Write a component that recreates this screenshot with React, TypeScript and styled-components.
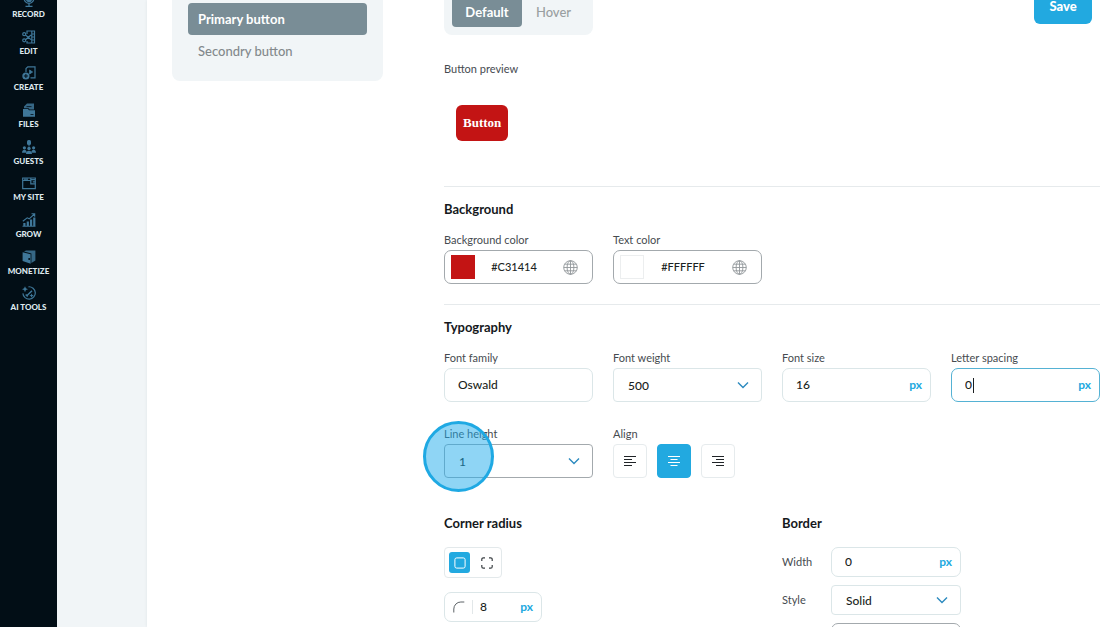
import React from 'react';
import styled, { createGlobalStyle, css } from 'styled-components';

const blue = '#22a9e0';
const slate = '#798d96';

const GlobalStyle = createGlobalStyle`
  *, *::before, *::after { box-sizing: border-box; }
  body { margin: 0; background: #fff; }
  body, button, input, select { font-family: Lato, "Liberation Sans", sans-serif; }
  button, input, select { margin: 0; }
  h2, ul { margin: 0; padding: 0; }
`;

const Page = styled.div`
  display: flex;
  height: 100vh;
  overflow: hidden;
  background: #f1f5f7;
`;

const Sidebar = styled.nav`
  flex: none;
  width: 57px;
  background: #020e16;
`;

const NavList = styled.ul`
  display: grid;
  grid-auto-rows: 1fr;
  height: 330px;
  margin-top: -7px;
  list-style: none;
`;

const NavLink = styled.a`
  display: flex;
  flex-direction: column;
  align-items: center;
  gap: 2px;
  color: #dfe9ee;
  font-size: 8px;
  line-height: 10px;
  font-weight: 900;
  text-decoration: none;
  white-space: nowrap;
  svg { display: block; width: 14px; height: 14px; color: #3f7799; }
`;

const Sheet = styled.main`
  flex: 1;
  display: flex;
  align-items: flex-start;
  gap: 61px;
  min-width: 0;
  margin-left: 90px;
  padding: 0 20px 0 25px;
  background: #fff;
  box-shadow: 0 0 3px rgba(20, 50, 70, 0.08);
`;

const SideCard = styled.div`
  flex: none;
  display: flex;
  flex-direction: column;
  width: 211px;
  padding: 3px 16px 14px;
  border-radius: 0 0 8px 8px;
  background: #f1f5f7;
`;

const SideTab = styled.button<{ $active?: boolean }>`
  height: 32px;
  padding: 0 10px;
  border: 0;
  border-radius: 4px;
  background: ${(p) => (p.$active ? slate : 'transparent')};
  color: ${(p) => (p.$active ? '#fff' : '#83898c')};
  font-size: 13px;
  font-weight: ${(p) => (p.$active ? 700 : 500)};
  text-align: left;
`;

const Editor = styled.div`
  flex: 1;
  min-width: 0;
`;

const TopBar = styled.div`
  display: flex;
  align-items: flex-start;
  justify-content: space-between;
  padding-right: 8px;
`;

const Segments = styled.div`
  display: grid;
  grid-template-columns: 70px 1fr;
  width: 149px;
  height: 35px;
  padding: 0 8px 8px;
  border-radius: 0 0 8px 8px;
  background: #f1f5f7;
`;

const Segment = styled.button<{ $active?: boolean }>`
  padding: 0 0 4px;
  border: 0;
  border-radius: 0 0 4px 4px;
  background: ${(p) => (p.$active ? slate : 'transparent')};
  color: ${(p) => (p.$active ? '#fff' : '#9a9fa1')};
  font-size: 13px;
  font-weight: ${(p) => (p.$active ? 700 : 500)};
`;

const SaveButton = styled.button`
  width: 58px;
  height: 24px;
  padding: 0 0 12px;
  border: 0;
  border-radius: 0 0 6px 6px;
  background: ${blue};
  color: #fff;
  font-size: 13px;
  line-height: 12px;
  font-weight: 900;
`;

const Preview = styled.section`
  display: flex;
  flex-direction: column;
  align-items: flex-start;
  gap: 28px;
  padding: 26px 0 45px;
`;

const PreviewButton = styled.button`
  height: 36px;
  margin-left: 12px;
  padding: 0 7px;
  border: 0;
  border-radius: 6px;
  background: #c31414;
  color: #fff;
  font-family: "Liberation Serif", serif;
  font-size: 13px;
  font-weight: 700;
`;

const Section = styled.section`
  padding: 12px 0 20px;
  border-top: 1px solid #e6eaec;
`;

const Heading = styled.h2`
  color: #15191c;
  font-size: 13px;
  line-height: 20px;
  font-weight: 700;
`;

const FieldGrid = styled.div`
  display: grid;
  grid-template-columns: repeat(4, minmax(0, 1fr));
  gap: 24px 20px;
  margin-top: 13px;
`;

const Field = styled.div`
  position: relative;
  display: flex;
  flex-direction: column;
  gap: 2px;
`;

const labelText = css`
  color: #464b50;
  font-size: 11px;
  line-height: 16px;
  font-weight: 400;
`;
const Label = styled.label`${labelText}`;
const Caption = styled.span`${labelText}`;

type Tone = 'light' | 'dark' | 'focus';
const toneColor = { light: '#dbe6e8', dark: '#a3a9ad', focus: '#55b2d4' };

const Box = styled.div<{ $tone?: Tone; $small?: boolean }>`
  position: relative;
  display: flex;
  align-items: center;
  height: ${(p) => (p.$small ? 30 : 34)}px;
  padding: 0 8px 0 13px;
  border: 1px solid ${(p) => toneColor[p.$tone || 'light']};
  border-radius: 7px;
  background: #fff;
`;

const ColorBox = styled(Box)`
  padding: 0 14px 0 6px;
`;

const TextInput = styled.input<{ $hug?: boolean }>`
  flex: ${(p) => (p.$hug ? 'none' : '1')};
  width: ${(p) => (p.$hug ? '8px' : '0')};
  min-width: 0;
  padding: 0;
  border: 0;
  outline: 0;
  background: transparent;
  color: #1b1f22;
  font-size: 12px;
  line-height: 20px;
  font-weight: 500;
`;

const HexInput = styled(TextInput)`
  padding-right: 10px;
  font-size: 11px;
  text-align: center;
`;

const TextCaret = styled.i`
  width: 1px;
  height: 15px;
  margin-right: auto;
  background: #1b1f22;
`;

const Unit = styled.span`
  color: ${blue};
  font-size: 12px;
  line-height: 16px;
  font-weight: 700;
`;

const Swatch = styled.span<{ $color: string }>`
  width: 24px;
  height: 24px;
  border: 1px solid ${(p) => (p.$color === '#FFFFFF' ? '#eceeef' : p.$color)};
  background: ${(p) => p.$color};
`;

const SelectBox = styled(Box)`
  padding: 0;
  border-radius: 4px;
  svg { position: absolute; right: 12px; pointer-events: none; }
`;

const Select = styled.select`
  width: 100%;
  height: 100%;
  padding: 0 30px 0 14px;
  border: 0;
  outline: 0;
  appearance: none;
  background: transparent;
  color: #1b1f22;
  font-size: 12px;
  font-weight: 500;
`;

const ButtonRow = styled.div`
  display: flex;
  gap: 10px;
`;

const AlignButton = styled.button<{ $active?: boolean }>`
  display: grid;
  place-items: center;
  width: 34px;
  height: 34px;
  padding: 0;
  border: 1px solid ${(p) => (p.$active ? blue : '#e6ebed')};
  border-radius: 4px;
  background: ${(p) => (p.$active ? blue : '#fff')};
  color: ${(p) => (p.$active ? '#fff' : '#202428')};
`;

const ClickHighlight = styled.span`
  position: absolute;
  top: -5px;
  left: -21px;
  width: 71px;
  height: 71px;
  border: 3px solid #1fa9e3;
  border-radius: 50%;
  background: rgba(31, 172, 235, 0.5);
  pointer-events: none;
`;

const Columns = styled.div`
  display: grid;
  grid-template-columns: 1fr 1fr;
  gap: 20px;
  padding-top: 35px;
`;

const Stack = styled.div`
  display: flex;
  flex-direction: column;
  align-items: flex-start;
  gap: 14px;
`;

const ModeGroup = styled.div`
  display: flex;
  gap: 6px;
  padding: 4px;
  border: 1px solid #e3e9eb;
  border-radius: 4px;
`;

const ModeButton = styled.button<{ $active?: boolean }>`
  display: grid;
  place-items: center;
  width: 21px;
  height: 21px;
  padding: 0;
  border: 0;
  border-radius: 3px;
  background: ${(p) => (p.$active ? blue : 'transparent')};
  color: ${(p) => (p.$active ? '#fff' : '#3b4044')};
`;

const RadiusBox = styled(Box)`
  width: 98px;
  gap: 7px;
  padding: 0 8px;
`;

const Separator = styled.i`
  width: 1px;
  height: 14px;
  background: #e2e7e9;
`;

const BorderRows = styled.div`
  display: grid;
  grid-template-columns: 49px 130px;
  align-items: center;
  row-gap: 8px;
`;

const Chevron = () => (
  <svg width="12" height="8" viewBox="0 0 12 8" fill="none" stroke="#2c8abf" strokeWidth="1.4" aria-hidden>
    <path d="M1 1.5 6 6.5 11 1.5" />
  </svg>
);

const Globe = () => (
  <svg width="15" height="15" viewBox="0 0 15 15" fill="none" stroke="#92979b" strokeWidth="0.9" aria-hidden>
    <circle cx="7.5" cy="7.5" r="6.8" />
    <ellipse cx="7.5" cy="7.5" rx="3.4" ry="6.8" />
    <path d="M7.5.7v13.6M.7 7.5h13.6M1.7 4.2h11.6M1.7 10.8h11.6" />
  </svg>
);

const alignPaths = {
  left: 'M0 1.5h12M0 4.5h8M0 7.5h12M0 10.5h8',
  center: 'M0 1.5h12M2.5 4.5h7M0 7.5h12M2.5 10.5h7',
  right: 'M0 1.5h12M4 4.5h8M0 7.5h12M4 10.5h8',
};
const AlignIcon = ({ kind }: { kind: keyof typeof alignPaths }) => (
  <svg width="12" height="12" viewBox="0 0 12 12" stroke="currentColor" strokeWidth="1.1" aria-hidden>
    <path d={alignPaths[kind]} />
  </svg>
);

const navItems: { label: string; art: React.ReactNode }[] = [
  {
    label: 'RECORD',
    art: (
      <g fill="none" stroke="currentColor" strokeWidth="1.3">
        <rect x="4.6" y="0" width="4.8" height="8.6" rx="2.4" fill="currentColor" />
        <path d="M2.2 5.5a4.8 4.8 0 0 0 9.6 0M7 10.5v2.8M3.5 13.4h7" />
      </g>
    ),
  },
  {
    label: 'EDIT',
    art: (
      <g fill="none" stroke="currentColor" strokeWidth="1.2">
        <path d="M5 4V1h7.5v12H5v-2M9.8 1v12M9.8 4h2.7M9.8 7h2.7M9.8 10h2.7M3.5 5l5.5 4.6M3.5 9.7 9 5" />
        <circle cx="2.2" cy="4.2" r="1.5" />
        <circle cx="2.2" cy="10.3" r="1.5" />
      </g>
    ),
  },
  {
    label: 'CREATE',
    art: (
      <g fill="none" stroke="currentColor" strokeWidth="1.2">
        <path d="M4 6V2.5L5.8.8H13v11H8.5" />
        <path d="m7.6 4 3 2-3 2z" fill="currentColor" strokeWidth=".8" />
        <circle cx="3.9" cy="10" r="3.6" fill="currentColor" stroke="none" />
        <path d="M3.9 8v4M1.9 10h4" stroke="#020e16" strokeWidth="1" />
      </g>
    ),
  },
  {
    label: 'FILES',
    art: (
      <g fill="currentColor">
        <path d="M1 6h5l1 1.2h6V13.7H1z" />
        <path d="M2 5.2V3.5L5 .6h7v5.8H7.6L6.6 5.2z" opacity=".85" />
        <path d="M4.5 3.6h5M8.5 11.5h3" stroke="#020e16" strokeWidth=".8" />
      </g>
    ),
  },
  {
    label: 'GUESTS',
    art: (
      <g fill="currentColor">
        <rect x="5" y="0" width="4" height="5" rx="1.5" />
        <path d="M6.5 5h1v1.6h-1z" />
        <circle cx="2.4" cy="7.8" r="1.6" />
        <circle cx="11.6" cy="7.8" r="1.6" />
        <circle cx="7" cy="8.5" r="1.7" />
        <path d="M0 12.8c0-3.8 4.2-3.8 4.6-.8l-1 .8zM14 12.8c0-3.8-4.2-3.8-4.6-.8l1 .8zM4 14c0-4.3 6-4.3 6 0z" />
      </g>
    ),
  },
  {
    label: 'MY SITE',
    art: (
      <g fill="none" stroke="currentColor" strokeWidth="1.2">
        <path d="M.7 2h12.6v10.6H.7zM.7 4.5h8M8.8 2v5.8h4.5" />
        <path d="M9 3.6h4M10.8 5.8h2.2M2 3.2h4" />
      </g>
    ),
  },
  {
    label: 'GROW',
    art: (
      <g fill="currentColor">
        <path d="M1.3 10h2.2v3H1.3zM4.7 8.5h2.2V13H4.7zM8 6.5h2.2V13H8zM11.2 4.5h2.2V13h-2.2zM.5 12.8h13v1H.5z" />
        <path d="M.8 8.2 5.2 4.8l2 1L12.4 1M9.5.8h3.2v3" fill="none" stroke="currentColor" strokeWidth="1.1" />
      </g>
    ),
  },
  {
    label: 'MONETIZE',
    art: (
      <g fill="currentColor">
        <path d="M.6 2.2 8.6 4.2v9.6L.6 11z" />
        <path d="M2 1.4 4 .6h9.4v10L9.4 13V3.6z" opacity=".85" />
        <circle cx="7.2" cy="9" r="1" fill="#020e16" />
      </g>
    ),
  },
  {
    label: 'AI TOOLS',
    art: (
      <g fill="none" stroke="currentColor" strokeWidth="1.2">
        <path d="M6.5.8a6.2 6.2 0 1 1-5.6 6.6" />
        <path d="m4.5 10 5.5-5.2M3.7 8.4l2 2.2" strokeWidth="1.5" />
        <path d="M3 .2 3.9 2.3 6 3.2 3.9 4.1 3 6.2 2.1 4.1 0 3.2 2.1 2.3zM9.6 7.4l.7 1.5 1.5.7-1.5.7-.7 1.5-.7-1.5-1.5-.7 1.5-.7z" fill="currentColor" stroke="none" />
      </g>
    ),
  },
];

const ColorField = ({ id, label, value }: { id: string; label: string; value: string }) => (
  <Field>
    <Label htmlFor={id}>{label}</Label>
    <ColorBox $tone="dark">
      <Swatch $color={value} />
      <HexInput id={id} defaultValue={value} />
      <Globe />
    </ColorBox>
  </Field>
);

const Dropdown = ({ id, value, tone, small }: { id: string; value: string; tone?: Tone; small?: boolean }) => (
  <SelectBox $tone={tone} $small={small}>
    <Select id={id} defaultValue={value}>
      <option>{value}</option>
    </Select>
    <Chevron />
  </SelectBox>
);

export default function App() {
  return (
    <>
      <GlobalStyle />
      <Page>
        <Sidebar>
          <NavList>
            {navItems.map(({ label, art }) => (
              <li key={label}>
                <NavLink href="#">
                  <svg viewBox="0 0 14 14" aria-hidden>{art}</svg>
                  {label}
                </NavLink>
              </li>
            ))}
          </NavList>
        </Sidebar>
        <Sheet>
          <SideCard>
            <SideTab $active>Primary button</SideTab>
            <SideTab>Secondry button</SideTab>
          </SideCard>
          <Editor>
            <TopBar>
              <Segments>
                <Segment $active>Default</Segment>
                <Segment>Hover</Segment>
              </Segments>
              <SaveButton>Save</SaveButton>
            </TopBar>
            <Preview>
              <Caption>Button preview</Caption>
              <PreviewButton>Button</PreviewButton>
            </Preview>
            <Section>
              <Heading>Background</Heading>
              <FieldGrid>
                <ColorField id="bg" label="Background color" value="#C31414" />
                <ColorField id="fg" label="Text color" value="#FFFFFF" />
              </FieldGrid>
            </Section>
            <Section>
              <Heading>Typography</Heading>
              <FieldGrid>
                <Field>
                  <Label htmlFor="family">Font family</Label>
                  <Box><TextInput id="family" defaultValue="Oswald" /></Box>
                </Field>
                <Field>
                  <Label htmlFor="weight">Font weight</Label>
                  <Dropdown id="weight" value="500" />
                </Field>
                <Field>
                  <Label htmlFor="size">Font size</Label>
                  <Box><TextInput id="size" defaultValue="16" /><Unit>px</Unit></Box>
                </Field>
                <Field>
                  <Label htmlFor="spacing">Letter spacing</Label>
                  <Box $tone="focus">
                    <TextInput id="spacing" defaultValue="0" $hug />
                    <TextCaret />
                    <Unit>px</Unit>
                  </Box>
                </Field>
                <Field>
                  <Label htmlFor="leading">Line height</Label>
                  <Dropdown id="leading" value="1" tone="dark" />
                  <ClickHighlight />
                </Field>
                <Field>
                  <Caption>Align</Caption>
                  <ButtonRow>
                    <AlignButton aria-label="Align left"><AlignIcon kind="left" /></AlignButton>
                    <AlignButton aria-label="Align center" $active><AlignIcon kind="center" /></AlignButton>
                    <AlignButton aria-label="Align right"><AlignIcon kind="right" /></AlignButton>
                  </ButtonRow>
                </Field>
              </FieldGrid>
              <Columns>
                <Stack>
                  <Heading>Corner radius</Heading>
                  <ModeGroup>
                    <ModeButton aria-label="All corners" $active>
                      <svg width="12" height="12" viewBox="0 0 12 12" fill="none" stroke="currentColor" aria-hidden>
                        <rect x="0.9" y="0.9" width="10.2" height="10.2" rx="1.8" />
                      </svg>
                    </ModeButton>
                    <ModeButton aria-label="Separate corners">
                      <svg width="12" height="12" viewBox="0 0 12 12" fill="none" stroke="currentColor" strokeWidth="1.2" aria-hidden>
                        <path d="M.8 4V2.3A1.5 1.5 0 0 1 2.3.8H4M8 .8h1.7a1.5 1.5 0 0 1 1.5 1.5V4M11.2 8v1.7a1.5 1.5 0 0 1-1.5 1.5H8M4 11.2H2.3A1.5 1.5 0 0 1 .8 9.7V8" />
                      </svg>
                    </ModeButton>
                  </ModeGroup>
                  <RadiusBox $small>
                    <svg width="12" height="12" viewBox="0 0 12 12" fill="none" stroke="#5c6266" aria-hidden>
                      <path d="M.8 11.5V8A7 7 0 0 1 7.8 1h3.5" />
                    </svg>
                    <Separator />
                    <TextInput aria-label="Radius" defaultValue="8" />
                    <Unit>px</Unit>
                  </RadiusBox>
                </Stack>
                <Stack>
                  <Heading>Border</Heading>
                  <BorderRows>
                    <Label htmlFor="bw">Width</Label>
                    <Box $small><TextInput id="bw" defaultValue="0" /><Unit>px</Unit></Box>
                    <Label htmlFor="bs">Style</Label>
                    <Dropdown id="bs" value="Solid" small />
                    <span />
                    <ColorBox $tone="dark"><HexInput aria-label="Border color" /></ColorBox>
                  </BorderRows>
                </Stack>
              </Columns>
            </Section>
          </Editor>
        </Sheet>
      </Page>
    </>
  );
}
